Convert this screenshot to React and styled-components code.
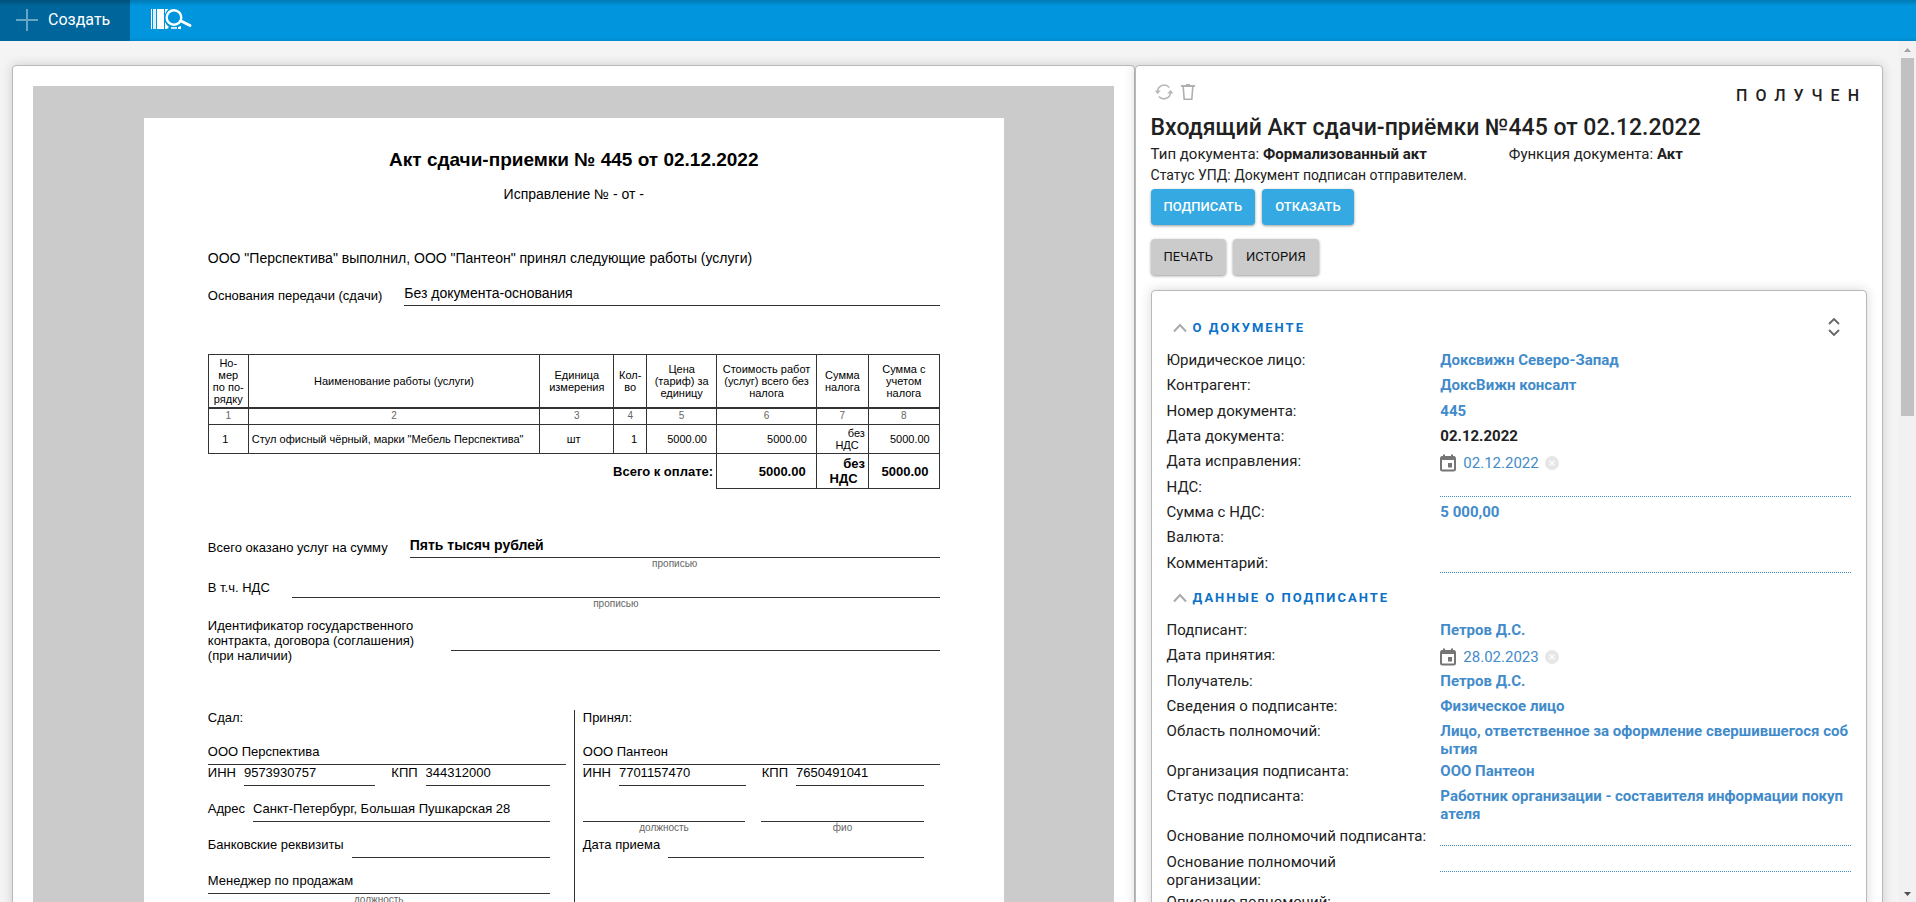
import React from "react";
import styled, { createGlobalStyle } from "styled-components";

const GlobalStyle = createGlobalStyle`
  *, *::before, *::after { box-sizing: border-box; }
  body {
    margin: 0;
    background: #f4f4f4;
    color: #212121;
    font-family: Roboto, sans-serif;
    font-size: 15px;
    line-height: 18px;
  }
  button, input { font: inherit; color: inherit; }
`;

/* ---------- Shell ---------- */

const Shell = styled.div`
  display: flex;
  flex-direction: column;
  height: 100vh;
  overflow: hidden;
`;

const TopBar = styled.header`
  display: flex;
  flex: none;
  height: 41px;
  background: linear-gradient(#0079b4, #0095dc 6px, #0095dc 38px, #0088ca);
`;

const CreateButton = styled.button`
  display: flex;
  align-items: center;
  gap: 10px;
  width: 130px;
  padding: 0 0 2px 16px;
  border: 0;
  background: linear-gradient(#005079, #00659a 6px);
  color: #fff;
  font-size: 16px;
  cursor: pointer;
`;

const SearchButton = styled.button`
  display: flex;
  align-items: flex-start;
  padding: 8px 20px;
  border: 0;
  background: none;
  cursor: pointer;
`;

const Body = styled.div`
  display: flex;
  flex: 1;
  min-height: 0;
`;

const Content = styled.main`
  flex: 1;
  display: grid;
  grid-template-columns: 3fr 2fr;
  align-items: start;
  padding: 24px 16px 0 12px;
  overflow: hidden;
`;

const Panel = styled.section`
  min-width: 0;
  padding: ${(p) => p.$padding};
  border: 1px solid #b9b9b9;
  border-radius: 4px;
  background: #fff;
  box-shadow: 0 0 12px rgba(0, 0, 0, 0.16);
`;

const ScrollTrack = styled.div`
  display: flex;
  flex-direction: column;
  align-items: center;
  flex: none;
  width: 17px;
  background: #f1f1f1;
`;

const ScrollArrow = styled.svg`
  flex: none;
  width: 17px;
  height: 17px;
`;

const ScrollThumb = styled.div`
  flex: none;
  width: 13px;
  height: calc((100% - 34px) * 0.433);
  margin-bottom: auto;
  background: #c1c1c1;
`;

/* ---------- Printed form ---------- */

const Preview = styled.div`
  padding: 32px 0 0 1px;
  background: #cbcbcb;
`;

const Paper = styled.article`
  max-width: 860px;
  margin: 0 auto;
  padding: 31px 64px 64px;
  background: #fff;
  color: #000;
  font-family: "Liberation Sans", Arial, sans-serif;
  font-size: 13px;
  line-height: 15px;
`;

const PaperTitle = styled.h1`
  margin: 0;
  font-size: 19px;
  line-height: 22px;
  text-align: center;
`;

const PaperText = styled.p`
  margin: ${(p) => p.$top}px 0 0;
  font-size: 14px;
  line-height: 16px;
  text-align: ${(p) => p.$align || "left"};
`;

const FormLine = styled.div`
  display: flex;
  align-items: center;
  gap: 22px;
  margin-top: ${(p) => p.$top}px;
`;

const LineLabel = styled.span`
  flex: none;
  width: ${(p) => (p.$wide ? "221px" : "auto")};
`;

const LineValue = styled.span`
  flex: 1;
  height: 21px;
  border-bottom: 1px solid #333;
  font-size: 14px;
  line-height: 16px;
  font-weight: ${(p) => (p.$bold ? 700 : 400)};
`;

const CaptionRow = styled.div`
  display: flex;
  gap: 22px;
`;

const GhostLabel = styled(LineLabel)`
  height: 0;
  visibility: hidden;
`;

const Caption = styled.span`
  flex: 1;
  height: 12px;
  color: #666;
  font-size: 10px;
  line-height: 12px;
  text-align: center;
`;

const WorkTable = styled.table`
  width: 100%;
  margin-top: 48px;
  border-collapse: collapse;
  table-layout: fixed;
  font-size: 11px;
  line-height: 12px;

  th, td {
    padding: 0 3px;
    border: 1px solid #333;
    font-weight: 400;
    text-align: center;
  }
  thead th { height: 53px; padding: 0; }
`;

const NumberRow = styled.tr`
  td { height: 17px; border-top: 2px solid #333; color: #666; font-size: 10px; }
`;

const WorkRow = styled.tr`
  td { height: 29px; }
`;

const TotalRow = styled.tr`
  font-size: 13px;
  line-height: 15px;
  && td, && th { height: 35px; font-weight: 700; }
  && th { border-left: 0; border-bottom: 0; text-align: right; }
`;

const Money = styled.td`
  && { text-align: right; }
  &::after { content: "\\00a0\\00a0"; }
`;

const Centered = styled.td`
  &::after { content: "\\00a0\\00a0"; }
`;

const WorkName = styled.td`
  && { text-align: left; }
`;

const Parties = styled.div`
  display: grid;
  grid-template-columns: 1fr 1fr;
  margin-top: 47px;
`;

const Party = styled.div`
  display: flex;
  flex-direction: column;
  padding: ${(p) => (p.$second ? "0 0 0 8px" : "0 8px 0 0")};
  border-left: ${(p) => (p.$second ? "1px solid #333" : "0")};
`;

const PartyName = styled.div`
  height: 21px;
  margin-top: 19px;
  border-bottom: 1px solid #333;
`;

const EntryRow = styled.div`
  display: flex;
  gap: 16px;
  padding-right: 16px;
  margin-top: ${(p) => (p.$tight ? 0 : 15)}px;
`;

const Entry = styled.div`
  display: flex;
  flex: 1 1 ${(p) => (p.$even ? "0" : "auto")};
  gap: 8px;
  white-space: nowrap;
`;

const EntryValue = styled.span`
  flex: 1;
  height: 21px;
  border-bottom: 1px solid #333;
`;

const EntryCaptions = styled.div`
  display: flex;
  gap: 16px;
  height: 15px;
  padding-right: 16px;
`;

/* ---------- Card header ---------- */

const HeaderBar = styled.div`
  display: flex;
  justify-content: space-between;
  height: 32px;
`;

const Tools = styled.div`
  display: flex;
  gap: 8px;
  padding: 2px 4px;
`;

const IconButton = styled.button`
  display: flex;
  flex: none;
  padding: 0;
  border: 0;
  background: none;
  cursor: pointer;
`;

const State = styled.span`
  margin-top: 4px;
  font-size: 16px;
  font-weight: 500;
  line-height: 20px;
  letter-spacing: 8px;
`;

const CardTitle = styled.h2`
  margin: 0;
  font-size: 23px;
  font-weight: 500;
  line-height: 28px;
`;

const Facts = styled.div`
  display: grid;
  grid-template-columns: 1fr 1fr;
  margin-top: 1px;
  line-height: 22px;

  b { font-weight: 700; }
`;

const Status = styled.div`
  font-size: 14px;
  line-height: 20px;
`;

const Actions = styled.div`
  display: flex;
  gap: 7px;
  margin-top: ${(p) => p.$top}px;
`;

const Action = styled.button`
  height: 36px;
  padding: 0 13px;
  border: 0;
  border-radius: 4px;
  background: ${(p) => (p.$primary ? "#34a9e2" : "#cbcbcb")};
  box-shadow: 0 1px 3px rgba(0, 0, 0, 0.4);
  color: ${(p) => (p.$primary ? "#fff" : "#111")};
  font-size: 13px;
  font-weight: ${(p) => (p.$primary ? 500 : 400)};
  cursor: pointer;
`;

/* ---------- Fields ---------- */

const FieldCard = styled.div`
  margin-top: 15px;
  padding: 27px 15px 24px;
  border: 1px solid #b9b9b9;
  border-radius: 4px;
  background: #fff;
  box-shadow: 0 0 12px rgba(0, 0, 0, 0.16);
`;

const SectionHead = styled.div`
  display: flex;
  justify-content: space-between;
  height: 20px;
  margin: ${(p) => p.$top || 0}px 11px 13px 6px;
`;

const SectionToggle = styled.button`
  display: flex;
  align-items: center;
  gap: 6px;
  padding: 0;
  border: 0;
  background: none;
  color: #0c71c8;
  font-size: 13px;
  font-weight: 700;
  letter-spacing: 2px;
  cursor: pointer;
`;

const Fields = styled.div`
  display: flex;
  flex-direction: column;
  gap: 4px;
`;

const Field = styled.div`
  display: grid;
  grid-template-columns: 2fr 3fr;
  align-items: start;
  min-height: 21px;

  &:nth-child(3n + 2) { min-height: 22px; }
`;

const FieldLabel = styled.label`
  padding-right: 10px;
`;

const FieldValue = styled.output`
  color: ${(p) => (p.$plain ? "#212121" : "#428bca")};
  font-weight: 700;
  word-break: break-all;
`;

const BlankInput = styled.input`
  width: 100%;
  height: 19px;
  padding: 0;
  border: 0;
  border-bottom: 1px dotted #428bca;
  background: none;
  color: #428bca;
  outline: 0;
`;

const DateBox = styled.div`
  display: flex;
  align-items: center;
  padding-top: 1px;
`;

const DateInput = styled.input`
  width: 82px;
  height: 20px;
  margin-left: 7px;
  padding: 0;
  border: 0;
  background: none;
  color: #428bca;
  outline: 0;
`;

/* ---------- Icons ---------- */

const PlusIcon = () => (
  <svg width="22" height="22" viewBox="0 0 22 22" stroke="#66a5c5" strokeWidth="2" aria-hidden="true">
    <path d="M11 0v22M0 11h22" />
  </svg>
);

const BarcodeSearchIcon = () => (
  <svg width="42" height="22" viewBox="0 0 42 22" aria-hidden="true">
    <g fill="#fff">
      <rect x="1" y="1" width="1" height="20" />
      <rect x="3" y="1" width="3" height="20" opacity="0.85" />
      <rect x="7" y="1" width="7" height="20" />
      <path d="M15 1h3.5a11 11 0 0 0-3.5 5zM15 14a11 11 0 0 0 4 5l-2 2h-2z" />
      <rect x="21" y="19" width="6" height="2" opacity="0.8" />
      <path d="M28 19l3-1v3h-3z" />
    </g>
    <circle cx="24" cy="9.500" r="7.300" fill="none" stroke="#fff" strokeWidth="2.400" />
    <path d="M31 13l9 4.500" fill="none" stroke="#fff" strokeWidth="2.800" strokeLinecap="round" />
  </svg>
);

const RefreshIcon = () => (
  <svg width="18" height="16" viewBox="0 0 18 16" aria-hidden="true">
    <g fill="none" stroke="#b8b8b8" strokeWidth="1.600">
      <path d="M2.400 8A6.800 7 0 0 1 14.300 3.500" />
      <path d="M15.700 8A6.800 7 0 0 1 3.900 12.500" />
    </g>
    <path d="M-.2 6.500h6L2.600 10.200zM12.300 9.500h6L15.600 5.800z" fill="#b8b8b8" />
  </svg>
);

const TrashIcon = () => (
  <svg width="14" height="16" viewBox="0 0 14 16" fill="none" stroke="#b0b0b0" aria-hidden="true">
    <path d="M0 2h14" strokeWidth="2" />
    <path d="M5 .5h4" />
    <path d="M2.200 3l1 12.200h7.600l1-12.200" strokeWidth="1.600" />
  </svg>
);

const ChevronIcon = () => (
  <svg width="14" height="10" viewBox="0 0 14 10" fill="none" stroke="#aaa" strokeWidth="2" aria-hidden="true">
    <path d="M1 8.500l6-6.500 6 6.500" />
  </svg>
);

const CollapseIcon = () => (
  <svg width="12" height="18" viewBox="0 0 12 18" fill="none" stroke="#666" strokeWidth="1.800" aria-hidden="true">
    <path d="M1 6l5-5 5 5M1 12l5 5 5-5" />
  </svg>
);

const CalendarIcon = () => (
  <svg width="16" height="18" viewBox="0 0 16 18" aria-hidden="true">
    <rect x="1" y="3" width="14" height="13.500" rx="1.500" fill="none" stroke="#757575" strokeWidth="2" />
    <path d="M1 2.500h14v3.500H1zM3 .5h2v3H3zM11 .5h2v3h-2zM8 9h4v4.500H8z" fill="#757575" />
  </svg>
);

const ClearIcon = () => (
  <svg width="14" height="14" viewBox="0 0 14 14" aria-hidden="true">
    <circle cx="7" cy="7" r="7" fill="#e6e6e6" />
    <path d="M4.500 4.500l5 5M9.500 4.500l-5 5" stroke="#fff" strokeWidth="1.200" />
  </svg>
);

/* ---------- Data ---------- */

const columns = [
  { width: 40, title: ["Но-", "мер", "по по-", "рядку"] },
  { width: 292, title: ["Наименование работы (услуги)"] },
  { width: 74, title: ["Единица", "измерения"] },
  { width: 33, title: ["Кол-", "во"] },
  { width: 70, title: ["Цена", "(тариф) за", "единицу"] },
  { width: 100, title: ["Стоимость работ", "(услуг) всего без", "налога"] },
  { width: 52, title: ["Сумма", "налога"] },
  { width: 71, title: ["Сумма с", "учетом", "налога"] },
];
const tableWidth = columns.reduce((sum, c) => sum + c.width, 0);

const aboutFields = [
  { label: "Юридическое лицо:", value: "Доксвижн Северо-Запад" },
  { label: "Контрагент:", value: "ДоксВижн консалт" },
  { label: "Номер документа:", value: "445" },
  { label: "Дата документа:", value: "02.12.2022", plain: true },
  { label: "Дата исправления:", date: "02.12.2022" },
  { label: "НДС:", blank: true },
  { label: "Сумма с НДС:", value: "5 000,00" },
  { label: "Валюта:", value: "" },
  { label: "Комментарий:", blank: true },
];

const signerFields = [
  { label: "Подписант:", value: "Петров Д.С." },
  { label: "Дата принятия:", date: "28.02.2023" },
  { label: "Получатель:", value: "Петров Д.С." },
  { label: "Сведения о подписанте:", value: "Физическое лицо" },
  { label: "Область полномочий:", value: "Лицо, ответственное за оформление свершившегося события" },
  { label: "Организация подписанта:", value: "ООО Пантеон" },
  { label: "Статус подписанта:", value: "Работник организации - составителя информации покупателя" },
  { label: "Основание полномочий подписанта:", blank: true },
  { label: "Основание полномочий организации:", blank: true },
  { label: "Описание полномочий:", blank: true },
];

/* ---------- Parts ---------- */

function FieldList({ id, items }) {
  return (
    <Fields>
      {items.map((item, i) => {
        const fieldId = `${id}-${i}`;
        return (
          <Field key={fieldId}>
            <FieldLabel htmlFor={fieldId}>{item.label}</FieldLabel>
            {item.date && (
              <DateBox>
                <IconButton type="button" aria-label="Календарь"><CalendarIcon /></IconButton>
                <DateInput id={fieldId} defaultValue={item.date} />
                <IconButton type="button" aria-label="Очистить"><ClearIcon /></IconButton>
              </DateBox>
            )}
            {item.blank && <BlankInput id={fieldId} />}
            {item.value !== undefined && (
              <FieldValue id={fieldId} $plain={item.plain}>{item.value}</FieldValue>
            )}
          </Field>
        );
      })}
    </Fields>
  );
}

function Requisites({ inn, kpp }) {
  return (
    <EntryRow $tight>
      <Entry><span>ИНН</span><EntryValue>{inn}</EntryValue></Entry>
      <Entry><span>КПП</span><EntryValue>{kpp}</EntryValue></Entry>
    </EntryRow>
  );
}

function ActForm() {
  return (
    <Paper>
      <PaperTitle>Акт сдачи-приемки № 445 от 02.12.2022</PaperTitle>
      <PaperText $top={15} $align="center">Исправление № - от -</PaperText>
      <PaperText $top={48}>
        ООО "Перспектива" выполнил, ООО "Пантеон" принял следующие работы (услуги)
      </PaperText>
      <FormLine $top={19}>
        <LineLabel>Основания передачи (сдачи)</LineLabel>
        <LineValue>Без документа-основания</LineValue>
      </FormLine>

      <WorkTable>
        <colgroup>
          {columns.map((c, i) => (
            <col key={i} style={{ width: `${(c.width / tableWidth) * 100}%` }} />
          ))}
        </colgroup>
        <thead>
          <tr>
            {columns.map((c, i) => (
              <th key={i} scope="col">
                {c.title.map((line, n) => (
                  <React.Fragment key={n}>{n > 0 && <br />}{line}</React.Fragment>
                ))}
              </th>
            ))}
          </tr>
        </thead>
        <tbody>
          <NumberRow>{columns.map((c, i) => <td key={i}>{i + 1}</td>)}</NumberRow>
          <WorkRow>
            <Centered>1</Centered>
            <WorkName>Стул офисный чёрный, марки "Мебель Перспектива"</WorkName>
            <Centered>шт</Centered>
            <Money>1</Money>
            <Money>5000.00</Money>
            <Money>5000.00</Money>
            <Money>без НДС</Money>
            <Money>5000.00</Money>
          </WorkRow>
          <TotalRow>
            <th scope="row" colSpan={5}>Всего к оплате:</th>
            <Money>5000.00</Money>
            <Money>без НДС</Money>
            <Money>5000.00</Money>
          </TotalRow>
        </tbody>
      </WorkTable>

      <FormLine $top={48}>
        <LineLabel>Всего оказано услуг на сумму</LineLabel>
        <LineValue $bold>Пять тысяч рублей</LineValue>
      </FormLine>
      <CaptionRow>
        <GhostLabel aria-hidden="true">Всего оказано услуг на сумму</GhostLabel>
        <Caption>прописью</Caption>
      </CaptionRow>
      <FormLine $top={7}>
        <LineLabel>В т.ч. НДС</LineLabel>
        <LineValue />
      </FormLine>
      <CaptionRow>
        <GhostLabel aria-hidden="true">В т.ч. НДС</GhostLabel>
        <Caption>прописью</Caption>
      </CaptionRow>
      <FormLine $top={8}>
        <LineLabel $wide>Идентификатор государственного контракта, договора (соглашения) (при наличии)</LineLabel>
        <LineValue />
      </FormLine>

      <Parties>
        <Party>
          <div>Сдал:</div>
          <PartyName>ООО Перспектива</PartyName>
          <Requisites inn="9573930757" kpp="344312000" />
          <EntryRow>
            <Entry><span>Адрес</span><EntryValue>Санкт-Петербург, Большая Пушкарская 28</EntryValue></Entry>
          </EntryRow>
          <EntryRow>
            <Entry><span>Банковские реквизиты</span><EntryValue /></Entry>
          </EntryRow>
          <EntryRow>
            <Entry><EntryValue>Менеджер по продажам</EntryValue></Entry>
          </EntryRow>
          <EntryCaptions><Caption>должность</Caption></EntryCaptions>
        </Party>
        <Party $second>
          <div>Принял:</div>
          <PartyName>ООО Пантеон</PartyName>
          <Requisites inn="7701157470" kpp="7650491041" />
          <EntryRow>
            <Entry $even><EntryValue /></Entry>
            <Entry $even><EntryValue /></Entry>
          </EntryRow>
          <EntryCaptions><Caption>должность</Caption><Caption>фио</Caption></EntryCaptions>
          <EntryRow $tight>
            <Entry><span>Дата приема</span><EntryValue /></Entry>
          </EntryRow>
        </Party>
      </Parties>
    </Paper>
  );
}

export default function App() {
  return (
    <Shell>
      <GlobalStyle />
      <TopBar>
        <CreateButton type="button"><PlusIcon />Создать</CreateButton>
        <SearchButton type="button" aria-label="Поиск по штрихкоду"><BarcodeSearchIcon /></SearchButton>
      </TopBar>
      <Body>
        <Content>
          <Panel $padding="20px 20px 0">
            <Preview><ActForm /></Preview>
          </Panel>
          <Panel $padding="16px 15px 24px">
            <HeaderBar>
              <Tools>
                <IconButton type="button" aria-label="Обновить"><RefreshIcon /></IconButton>
                <IconButton type="button" aria-label="Удалить"><TrashIcon /></IconButton>
              </Tools>
              <State>ПОЛУЧЕН</State>
            </HeaderBar>
            <CardTitle>Входящий Акт сдачи-приёмки №445 от 02.12.2022</CardTitle>
            <Facts>
              <span>Тип документа: <b>Формализованный акт</b></span>
              <span>Функция документа: <b>Акт</b></span>
            </Facts>
            <Status>Статус УПД: Документ подписан отправителем.</Status>
            <Actions $top={4}>
              <Action type="button" $primary>ПОДПИСАТЬ</Action>
              <Action type="button" $primary>ОТКАЗАТЬ</Action>
            </Actions>
            <Actions $top={14}>
              <Action type="button">ПЕЧАТЬ</Action>
              <Action type="button">ИСТОРИЯ</Action>
            </Actions>
            <FieldCard>
              <SectionHead>
                <SectionToggle type="button"><ChevronIcon />О ДОКУМЕНТЕ</SectionToggle>
                <IconButton type="button" aria-label="Развернуть все"><CollapseIcon /></IconButton>
              </SectionHead>
              <FieldList id="about" items={aboutFields} />
              <SectionHead $top={13}>
                <SectionToggle type="button"><ChevronIcon />ДАННЫЕ О ПОДПИСАНТЕ</SectionToggle>
              </SectionHead>
              <FieldList id="signer" items={signerFields} />
            </FieldCard>
          </Panel>
        </Content>
        <ScrollTrack aria-hidden="true">
          <ScrollArrow viewBox="0 0 17 17"><path d="M5 11h7l-3.500-4z" fill="#a3a3a3" /></ScrollArrow>
          <ScrollThumb />
          <ScrollArrow viewBox="0 0 17 17"><path d="M5 7h7l-3.500 4z" fill="#505050" /></ScrollArrow>
        </ScrollTrack>
      </Body>
    </Shell>
  );
}
